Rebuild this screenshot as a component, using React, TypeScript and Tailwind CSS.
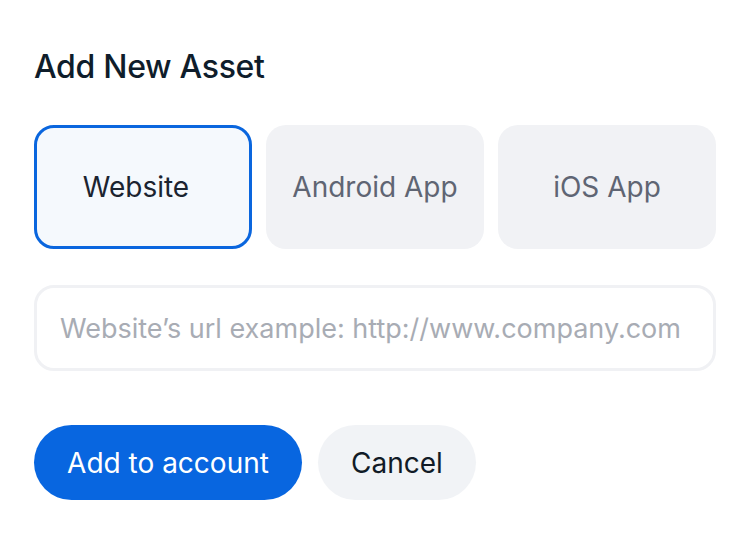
import { useState } from "react";

const assetTypes = ["Website", "Android App", "iOS App"];

export default function App() {
  const [selected, setSelected] = useState("Website");

  return (
    <div
      className="h-[541px] w-[750px] bg-white px-[34px] pt-[47px]"
      style={{ fontFamily: "Inter, 'Noto Sans', sans-serif" }}
    >
      <h1 className="text-[32px] font-medium leading-[40px] tracking-[-0.01em] text-[#0f1d2b]">
        Add New Asset
      </h1>

      {/* Asset type picker */}
      <div className="mt-[38px] grid grid-cols-3 gap-[14px]">
        {assetTypes.map((t) => {
          const active = t === selected;
          return (
            <button
              key={t}
              onClick={() => setSelected(t)}
              className={
                active
                  ? "flex h-[124px] items-center justify-center rounded-[20px] border-[3px] border-[#0a66de] bg-[#f5f9fd] pr-[14px] text-[28px] text-[#1b2430]"
                  : "flex h-[124px] items-center justify-center rounded-[20px] border-[3px] border-transparent bg-[#f1f2f5] text-[28px] text-[#5f6573]"
              }
            >
              {t}
            </button>
          );
        })}
      </div>

      {/* Url input */}
      <input
        type="text"
        placeholder="Website’s url example: http://www.company.com"
        className="mt-[36px] h-[86px] w-full rounded-[20px] border-[3px] border-[#f0f1f4] bg-white px-[23px] text-[27px] text-[#1b2430] outline-none placeholder:text-[#a8acb4]"
      />

      {/* Actions */}
      <div className="mt-[54px] flex gap-[16px]">
        <button className="h-[75px] w-[268px] rounded-full bg-[#0866e0] text-[28px] text-white">
          Add to account
        </button>
        <button className="h-[75px] w-[158px] rounded-full bg-[#f1f3f6] text-[28px] text-[#111b27]">
          Cancel
        </button>
      </div>
    </div>
  );
}
